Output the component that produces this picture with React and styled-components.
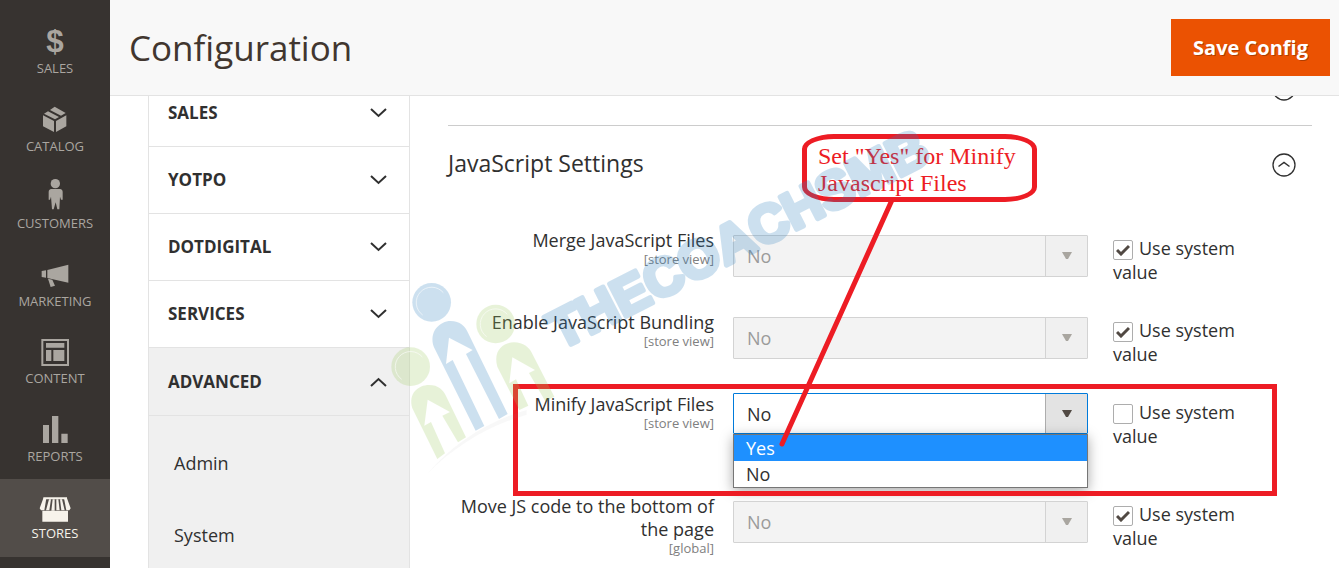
import React, { useState } from "react";
import styled, { createGlobalStyle } from "styled-components";

const GlobalStyle = createGlobalStyle`
  * {
    box-sizing: border-box;
  }

  body {
    margin: 0;
    background: #fff;
    color: #303030;
    font-family: "Open Sans", "Noto Sans", sans-serif;
    font-size: 18px;
    line-height: 24px;
  }
`;

const Page = styled.div`
  position: relative;
  display: flex;
  height: 100vh;
  overflow: hidden;
`;

/* ---- left menu ---- */

const Sidebar = styled.nav`
  flex: none;
  width: 110px;
  background: #373330;
`;

const Menu = styled.ul`
  list-style: none;
  margin: 0;
  padding: 14px 0 0;
`;

const MenuItem = styled.li`
  height: 78px;
  background: ${props => (props.$active ? "#524d49" : "none")};

  &:nth-child(even) {
    height: 77px;
  }
`;

const MenuLink = styled.a`
  display: flex;
  flex-direction: column;
  align-items: center;
  gap: 2px;
  padding-top: 15px;
  color: ${props => (props.$active ? "#f7f3eb" : "#aaa6a0")};
  font-size: 13px;
  line-height: 18px;
  text-decoration: none;
  text-transform: uppercase;
`;

const MenuIcon = styled.svg`
  width: 28px;
  height: 28px;
  overflow: visible;
  fill: currentColor;
`;

/* ---- header ---- */

const Main = styled.div`
  flex: 1;
  min-width: 0;
  display: flex;
  flex-direction: column;
`;

const Header = styled.header`
  flex: none;
  display: flex;
  justify-content: space-between;
  align-items: center;
  height: 96px;
  padding: 0 9px 0 19px;
  background: #f8f8f8;
  border-bottom: 1px solid #e3e3e3;
`;

const Title = styled.h1`
  margin: 0;
  color: #41362f;
  font-size: 35px;
  font-weight: 400;
  line-height: 48px;
`;

const SaveButton = styled.button`
  padding: 16px 21px;
  border: 1px solid #eb5202;
  background: #eb5202;
  color: #fff;
  font: 700 20px/23px "Open Sans", sans-serif;
  text-shadow: 1px 1px 0 rgba(0, 0, 0, 0.25);
  cursor: pointer;
`;

/* the columns below are scrolled a little way under the header */
const Scroller = styled.div`
  flex: 1;
  min-height: 0;
  overflow: hidden;
`;

const Columns = styled.div`
  display: flex;
  align-items: flex-start;
  gap: 38px;
  margin-top: -16px;
  padding: 0 27px 0 38px;
`;

/* ---- config tabs ---- */

const Tabs = styled.div`
  flex: none;
  width: 262px;
  border: 1px solid #e3e3e3;
  border-top: none;
`;

const Tab = styled.button`
  display: flex;
  justify-content: space-between;
  align-items: center;
  width: 100%;
  height: ${props => (props.$open ? "68px" : "67px")};
  padding: 0 22px 0 19px;
  border: none;
  border-bottom: 1px solid #e3e3e3;
  background: ${props => (props.$open ? "#f0f0f0" : "#fff")};
  color: #303030;
  font: 700 17px/24px "Open Sans", sans-serif;
  text-transform: uppercase;
`;

const TabChevron = styled.svg`
  width: 17px;
  height: 10px;
  fill: none;
  stroke: #303030;
  stroke-width: 2;
  transform: ${props => (props.$up ? "rotate(180deg)" : "none")};
`;

const SubMenu = styled.ul`
  list-style: none;
  margin: 0;
  padding: 11px 0 60px;
  background: #f0f0f0;
`;

const SubLink = styled.a`
  display: block;
  padding: 24px 25px;
  color: #303030;
  text-decoration: none;
`;

/* ---- settings ---- */

const Settings = styled.main`
  flex: 1;
  min-width: 0;
`;

const SectionHead = styled.div`
  display: flex;
  justify-content: space-between;
  align-items: center;
  padding-right: 16px;
`;

const ClosedSection = styled(SectionHead)`
  height: 46px;
  padding-bottom: 28px;
  justify-content: flex-end;
  border-bottom: 1px solid #cccccc;
`;

const SectionTitle = styled.h2`
  margin: 0;
  padding-bottom: 4px;
  font-size: 23px;
  font-weight: 500;
  line-height: 30px;
`;

const OpenSection = styled(SectionHead)`
  height: 78px;
  margin-bottom: 25px;
`;

const RoundButton = styled.button`
  display: grid;
  padding: 0;
  border: none;
  background: none;
`;

const Row = styled.div`
  display: grid;
  grid-template-columns: 266fr 355fr 205fr;
  column-gap: 19px;
  align-items: start;
  padding-bottom: ${props => (props.$open ? "47px" : "27px")};
`;

const FieldLabel = styled.label`
  display: block;
  font-weight: 500;
  line-height: 23px;
  text-align: right;
`;

const Scope = styled.span`
  display: block;
  color: #808080;
  font-size: 13px;
  font-weight: 400;
  line-height: 14px;
`;

const Field = styled.div`
  position: relative;
  padding-top: ${props => (props.$open ? 0 : "6px")};
`;

const SelectBox = styled.div`
  display: grid;
  grid-template-columns: 1fr 42px;
  height: ${props => (props.$open ? "41px" : "42px")};
  border: 1px solid ${props => (props.$open ? "#007bdb" : "#d3d3d3")};
  border-radius: 1px;
  background: ${props => (props.$open ? "#fff" : "#f3f3f3")};
`;

const Select = styled.select`
  grid-area: 1 / 1 / 2 / 3;
  appearance: none;
  width: 100%;
  padding: 0 55px 0 13px;
  border: none;
  outline: none;
  background: none;
  color: #303030;
  font: 400 18px/24px "Open Sans", sans-serif;

  &:disabled {
    color: #9b9b9b;
    opacity: 1;
  }
`;

const SelectArrow = styled.span`
  grid-area: 1 / 2;
  display: grid;
  place-items: center;
  border-left: 1px solid ${props => (props.$open ? "#adadad" : "#d3d3d3")};
  background: ${props => (props.$open ? "#e3e3e3" : "#f0f0f0")};
  color: ${props => (props.$open ? "#514943" : "#a9a6a0")};
  pointer-events: none;
`;

const Options = styled.ul`
  position: absolute;
  top: 100%;
  left: 0;
  right: 0;
  list-style: none;
  margin: 0;
  padding: 0;
  border: 1px solid #767676;
  background: #fff;
  box-shadow: 0 3px 12px rgba(0, 0, 0, 0.35);
`;

const Option = styled.li`
  padding: 1px 12px 0;
  line-height: 25px;
  background: ${props => (props.$selected ? "#1e90ff" : "#fff")};
  color: ${props => (props.$selected ? "#fff" : "#303030")};
`;

const UseDefault = styled.label`
  padding: 7px 56px 0 6px;
`;

const Tick = styled.span`
  display: inline-grid;
  place-items: center;
  width: 20px;
  height: 20px;
  margin-right: 6px;
  vertical-align: -5px;
`;

const Checkbox = styled.input`
  grid-area: 1 / 1;
  appearance: none;
  width: 20px;
  height: 20px;
  margin: 0;
  border: 1px solid #adadad;
  border-radius: 2px;
  background: #fff;
`;

const TickMark = styled.svg`
  grid-area: 1 / 1;
  z-index: 1;
  width: 14px;
  height: 12px;
  fill: none;
  stroke: #514943;
  stroke-width: 3;
  pointer-events: none;
`;

/* ---- notes drawn over the page ---- */

const Overlay = styled.svg`
  position: absolute;
  top: 0;
  left: 0;
  width: 1339px;
  height: 568px;
  pointer-events: none;
`;

const Callout = styled.p`
  position: absolute;
  top: 134px;
  left: 802px;
  width: 235px;
  margin: 0;
  padding: 4px 10px 0 11px;
  border: 5px solid #ed1c24;
  border-radius: 32px / 15px;
  color: #ed1c24;
  font: 24px/27px "Liberation Serif", serif;
`;

const icons = {
  Sales: (
    <text x="42" y="69" textAnchor="middle" fontFamily="Liberation Sans" fontWeight="700" fontSize="94">$</text>
  ),
  Catalog: (
    <g transform="translate(-123 -321)">
      <path d="M132 341l12-7 33 17-12 7zM150 330l14-10 33 19-14 8z" />
      <path d="M129 346l33 17v33l-33-17zM168 363l31-17v33l-31 17z" />
    </g>
  ),
  Customers: (
    <g transform="translate(-123 -552)">
      <circle cx="166" cy="551" r="14" />
      <path d="M154 567h26q8 1 8 9v23h-5l-3-9-2 38h-6l-5-21-6 21h-5l-3-38-3 9h-4v-23q0-8 8-9z" />
    </g>
  ),
  Marketing: (
    <g transform="translate(-123 -786)">
      <path d="M125 813l13-2v22l-13-2zM142 810l63-16v54l-63-14z" />
      <path d="M144 836l13 3 8 18-13 4z" />
    </g>
  ),
  Content: (
    <g transform="translate(-123 -177)">
      <path fillRule="evenodd" d="M124 177h83v81h-83zM130 183v69h71v-69z" />
      <path d="M138 189h55v14h-55zM138 210h16v33h-16zM160 210h33v33h-33z" />
    </g>
  ),
  Reports: (
    <g transform="translate(-123 -411)">
      <path d="M129 435h18v54h-18zM156 408h19v81h-19zM184 461h19v28h-19z" />
    </g>
  ),
  Stores: (
    <g transform="translate(-123 -642)">
      <path d="M130 652h71v6h-71zM127 692h77v33h-77z" />
      <path d="M130 655h9l-6 36h-10l-4-6zM147 658h6l-5 33h-10zM158 658h6v34h-10zM169 658h6l4 33h-10zM180 658h6l8 33h-10zM192 655h9l11 30-4 6h-9z" />
    </g>
  )
};

const tabs = ["Sales", "Yotpo", "Dotdigital", "Services"];

const fields = [
  { id: "merge", label: "Merge JavaScript Files", scope: "[store view]", system: true },
  { id: "bundling", label: "Enable JavaScript Bundling", scope: "[store view]", system: true },
  { id: "minify", label: "Minify JavaScript Files", scope: "[store view]", system: false, open: true },
  { id: "move", label: "Move JS code to the bottom of the page", scope: "[global]", system: true }
];

const CircleChevron = () => (
  <svg width="24" height="24" fill="none" stroke="#303030">
    <circle cx="12" cy="12" r="11" strokeWidth="1.3" />
    <path d="M6.500 13.500L12 9.500l5.500 4" strokeWidth="1.500" />
  </svg>
);

const ConfigField = ({ id, label, scope, system, open }) => {
  const [useSystem, setUseSystem] = useState(system);
  return (
    <Row $open={open}>
      <FieldLabel htmlFor={id}>
        {label}
        <Scope>{scope}</Scope>
      </FieldLabel>
      <Field $open={open}>
        <SelectBox $open={open}>
          <Select id={id} disabled={useSystem} defaultValue="No">
            <option>Yes</option>
            <option>No</option>
          </Select>
          <SelectArrow $open={open}>
            <svg width="10" height="8" fill="currentColor"><path d="M0 0h10L6 7H4z" /></svg>
          </SelectArrow>
        </SelectBox>
        {open && (
          <Options role="listbox" aria-label={label}>
            <Option role="option" aria-selected="true" $selected>Yes</Option>
            <Option role="option" aria-selected="false">No</Option>
          </Options>
        )}
      </Field>
      <UseDefault>
        <Tick>
          <Checkbox type="checkbox" checked={useSystem} onChange={() => setUseSystem(!useSystem)} />
          {useSystem && <TickMark viewBox="0 0 14 12"><path d="M1 6l4 4 8-8" /></TickMark>}
        </Tick>
        Use system value
      </UseDefault>
    </Row>
  );
};

const Notes = () => (
  <>
    <Overlay viewBox="0 0 1339 568">
      <g fill="none" stroke="#ed1c24" strokeWidth="5">
        <rect x="515.500" y="386.500" width="759" height="107" />
        <path d="M892 200L782 444" strokeLinecap="round" />
      </g>
    </Overlay>
    <Callout>Set "Yes" for Minify Javascript Files</Callout>
  </>
);

const Watermark = () => (
  <Overlay viewBox="0 0 1339 568">
    <g transform="translate(380 270) scale(0.3333)">
      <g opacity="0.24" fill="#2f82c1">
        <circle cx="155" cy="97" r="58" />
        <path d="M287 482L162 232C145 185 180 153 212 153C240 153 256 170 264 188L383 432L357 447L258 252L278 240L207 203L198 282L218 270L313 468Z" />
      </g>
      <g opacity="0.24" fill="#9fcd61">
        <circle cx="347" cy="162" r="58" />
        <circle cx="92" cy="290" r="58" />
        <path d="M418 420L352 290C338 240 372 217 402 217C430 217 448 232 456 250L523 380L496 394L447 309L465 300L397 262L388 340L408 328L445 407Z" />
        <path d="M172 567L97 415C84 370 115 345 147 345C175 345 190 360 198 378L258 502L234 517L187 437L210 426L143 389L133 467L153 456L195 550Z" />
      </g>
      <g fill="none" stroke="#fff" strokeWidth="3" opacity="0.6">
        <path d="M128 135A46 46 0 1 1 190 68" />
        <path d="M320 200A46 46 0 1 1 382 133" />
        <path d="M65 328A46 46 0 1 1 127 261" />
      </g>
      <path d="M140 614C220 520 320 455 440 420L440 434C330 465 220 530 140 614Z" fill="#888" opacity="0.06" />
    </g>
    <text
      transform="translate(560 350) rotate(-27)"
      fontFamily="Liberation Sans"
      fontWeight="700"
      fontSize="53"
      fill="#2f82c1"
      stroke="#2f82c1"
      strokeWidth="5"
      strokeLinejoin="round"
      opacity="0.24"
    >
      THECOACHSMB
    </text>
  </Overlay>
);

const App = () => (
  <Page>
    <GlobalStyle />
    <Sidebar>
      <Menu>
        {Object.keys(icons).map(name => (
          <MenuItem key={name} $active={name === "Stores"}>
            <MenuLink href="#" $active={name === "Stores"}>
              <MenuIcon viewBox="0 0 84 84">{icons[name]}</MenuIcon>
              {name}
            </MenuLink>
          </MenuItem>
        ))}
      </Menu>
    </Sidebar>
    <Main>
      <Header>
        <Title>Configuration</Title>
        <SaveButton>Save Config</SaveButton>
      </Header>
      <Scroller>
        <Columns>
          <Tabs>
            {tabs.map(name => (
              <Tab key={name}>
                {name}
                <TabChevron viewBox="0 0 17 10"><path d="M1 1l7.500 7L16 1" /></TabChevron>
              </Tab>
            ))}
            <Tab $open>
              Advanced
              <TabChevron $up viewBox="0 0 17 10"><path d="M1 1l7.500 7L16 1" /></TabChevron>
            </Tab>
            <SubMenu>
              <li><SubLink href="#">Admin</SubLink></li>
              <li><SubLink href="#">System</SubLink></li>
            </SubMenu>
          </Tabs>
          <Settings>
            <ClosedSection>
              <RoundButton aria-label="Expand section"><CircleChevron /></RoundButton>
            </ClosedSection>
            <OpenSection>
              <SectionTitle>JavaScript Settings</SectionTitle>
              <RoundButton aria-label="Collapse section"><CircleChevron /></RoundButton>
            </OpenSection>
            {fields.map(field => <ConfigField key={field.id} {...field} />)}
          </Settings>
        </Columns>
      </Scroller>
    </Main>
    <Notes />
    <Watermark />
  </Page>
);

export default App;
